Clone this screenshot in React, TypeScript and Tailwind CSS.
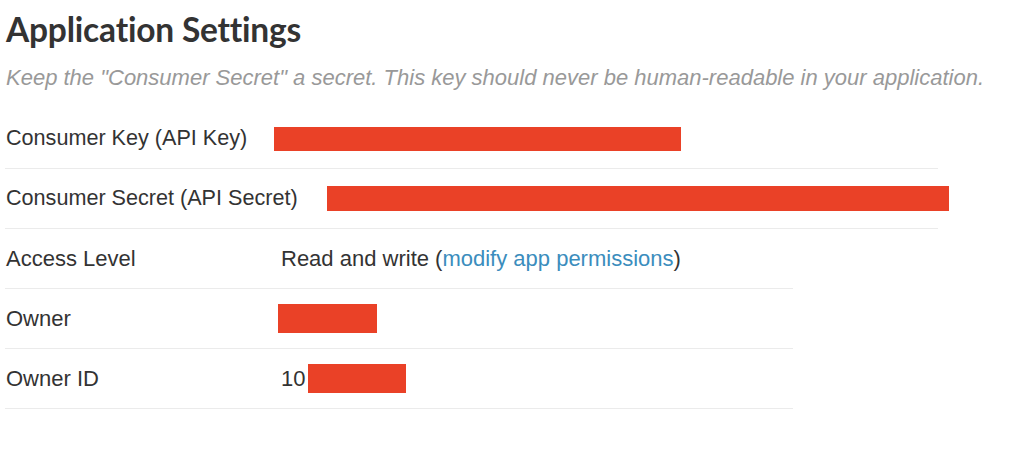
export default function App() {
  const redact = "bg-[#ea4127] inline-block";
  return (
    <div className="min-h-[452px] w-[1024px] bg-white text-[#333] font-['Liberation_Sans',Arial,sans-serif]">
      <div className="pl-[5px] pt-[9px]">
        <h1 className="pl-px text-[33.5px] leading-[40px] font-bold font-['Lato','Liberation_Sans',sans-serif] text-[#333] tracking-[-0.2px]">
          Application Settings
        </h1>
        <p className="pl-px mt-[16px] text-[22px] leading-[26px] italic text-[#999] whitespace-nowrap">
          Keep the "Consumer Secret" a secret. This key should never be human-readable in your application.
        </p>

        <div className="mt-[18px] w-[933px]">
          <div className="flex items-center h-[60px] border-b border-[#ebebeb] text-[21.6px]">
            <span className="pl-px">Consumer Key (API Key)</span>
            <span className={`${redact} ml-[27px] w-[407px] h-[24px]`} />
          </div>
          <div className="flex items-center h-[60px] border-b border-[#ebebeb] text-[21.6px] whitespace-nowrap">
            <span className="pl-px">Consumer Secret (API Secret)</span>
            <span className={`${redact} ml-[29px] w-[622px] h-[25px] shrink-0`} />
          </div>
        </div>

        <div className="w-[788px] text-[22px]">
          <div className="flex items-center h-[60px] border-b border-[#ebebeb]">
            <span className="pl-px w-[276px]">Access Level</span>
            <span>
              Read and write (<a href="#" className="text-[#3b8dbd]">modify app permissions</a>)
            </span>
          </div>
          <div className="flex items-center h-[60px] border-b border-[#ebebeb]">
            <span className="pl-px w-[273px]">Owner</span>
            <span className={`${redact} w-[99px] h-[29px]`} />
          </div>
          <div className="flex items-center h-[60px] border-b border-[#ebebeb]">
            <span className="pl-px w-[276px]">Owner ID</span>
            <span>10</span>
            <span className={`${redact} ml-[3px] w-[98px] h-[29px]`} />
          </div>
        </div>
      </div>
    </div>
  );
}
